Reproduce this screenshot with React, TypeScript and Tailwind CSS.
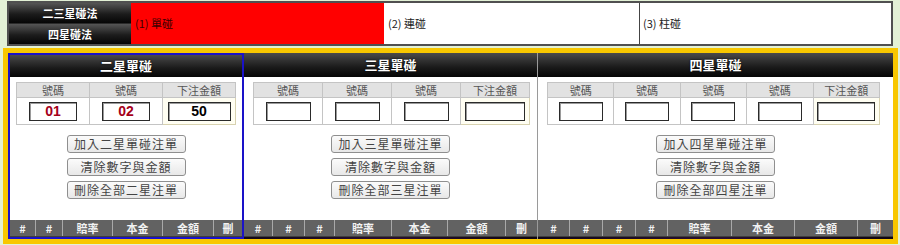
import React from "react";

const FONT = '"Noto Sans CJK TC", "Liberation Sans", sans-serif';

type PanelProps = {
  title: string;
  count: number;
  numW: number;
  amtW: number;
  values?: string[];
  amount?: string;
  addLabel: string;
  delLabel: string;
  bar: { w: number; label: string }[];
  tableMl: number;
  tableW: number;
  selected?: boolean;
  rightBorder?: boolean;
  width: number;
};

function Panel(p: PanelProps) {
  const cols = Array.from({ length: p.count });
  return (
    <div
      className={
        "flex flex-col h-full bg-white " +
        (p.selected ? "border-2 border-[#1a12c8] " : "") +
        (p.rightBorder ? "border-r border-r-[#9a9a9a] " : "")
      }
      style={{ width: p.width }}
    >
      <div
        className={
          "flex items-center justify-center text-white font-bold text-[13px] bg-[linear-gradient(#4a4a4a,#1a1a1a_60%,#050505)] [text-shadow:0_0_2px_#000] " +
          (p.selected ? "h-[22px]" : "h-[24px]")
        }
      >
        {p.title}
      </div>
      <table
        className="mt-[5px] border-collapse table-fixed border border-[#bdbdbd]"
        style={{ marginLeft: p.tableMl, width: p.tableW }}
      >
        <tbody>
          <tr className="h-[15px] bg-[#e2e2e2]">
            {cols.map((_, i) => (
              <td
                key={i}
                className="border border-[#c4c4c4] text-center text-[11px] leading-[13px] text-[#555] p-0"
              >
                號碼
              </td>
            ))}
            <td className="border border-[#c4c4c4] text-center text-[11px] leading-[13px] text-[#555] p-0">
              下注金額
            </td>
          </tr>
          <tr className="h-[27px]">
            {cols.map((_, i) => (
              <td key={i} className="border border-[#c4c4c4] p-0">
                <div className="flex justify-center">
                  <div
                    className="h-[19px] border border-[#2a2a2a] shadow-[inset_1px_1px_0_#9a9a9a] bg-white flex items-center justify-center text-[14px] font-bold text-[#a5001a] font-['Liberation_Sans']"
                    style={{ width: p.numW }}
                  >
                    {p.values ? p.values[i] : ""}
                  </div>
                </div>
              </td>
            ))}
            <td className="border border-[#d8d2b0] p-0 bg-[#fffef2]">
              <div className="flex justify-center">
                <div
                  className="h-[19px] border border-[#2a2a2a] shadow-[inset_1px_1px_0_#9a9a9a] bg-white flex items-center justify-center text-[14px] font-bold text-black font-['Liberation_Sans']"
                  style={{ width: p.amtW }}
                >
                  {p.amount ?? ""}
                </div>
              </div>
            </td>
          </tr>
        </tbody>
      </table>
      <div className="mt-[10px] flex flex-col items-center gap-[5px]">
        {[p.addLabel, "清除數字與金額", p.delLabel].map((l, i) => (
          <div
            key={i}
            className="w-[119px] h-[18px] rounded-[3px] border border-[#8f8f8f] bg-[linear-gradient(#fbfbfb,#e8e8e8)] flex items-center justify-center text-[12px] text-[#444] tracking-[1px]"
          >
            {l}
          </div>
        ))}
      </div>
      <div className="flex-1" />
      <div className="h-[17px] flex bg-[#626262] border-b border-b-[#3e3e3e]">
        {p.bar.map((b, i) => (
          <div
            key={i}
            className={
              "flex items-center justify-center text-[11px] font-bold text-[#f2f2f2] " +
              (i < p.bar.length - 1 ? "border-r border-r-[#a8a8a8]" : "")
            }
            style={{ width: b.w }}
          >
            {b.label}
          </div>
        ))}
      </div>
      {!p.selected && <div className="h-[2px] bg-[linear-gradient(90deg,#120818,#2a1030,#100612)]" />}
    </div>
  );
}

export default function App() {
  return (
    <div
      className="w-[900px] h-[245px] bg-[#e3f1d6] overflow-hidden"
      style={{ fontFamily: FONT }}
    >
      <div className="ml-[7px] mt-[1px] w-[886px] h-[45px] flex border-2 border-[#505050] bg-white">
        <div className="w-[122px] flex flex-col gap-[1px] bg-[#2a2a2a]">
          <div className="flex-1 flex items-center justify-center text-white font-bold text-[11px] bg-[linear-gradient(#555,#1c1c1c_55%,#050505)]">
            二三星碰法
          </div>
          <div className="flex-1 flex items-center justify-center text-white font-bold text-[11px] bg-[linear-gradient(#555,#1c1c1c_55%,#050505)]">
            四星碰法
          </div>
        </div>
        <div className="w-[253px] bg-[#ff0000] flex items-center pl-[4px] text-[11px] text-[#3a0000]">
          (1) 單碰
        </div>
        <div className="w-[256px] flex items-center pl-[4px] text-[11px] text-[#222] border-r border-r-[#444]">
          (2) 連碰
        </div>
        <div className="flex-1 flex items-center pl-[3px] text-[11px] text-[#222]">
          (3) 柱碰
        </div>
      </div>
      <div className="ml-[3px] mt-[2px] w-[895px] h-[196px] border-[5px] border-[#f8c700] flex">
        <Panel
          title="二星單碰"
          count={2}
          numW={48}
          amtW={63}
          values={["01", "02"]}
          amount="50"
          addLabel="加入二星單碰注單"
          delLabel="刪除全部二星注單"
          tableMl={6}
          tableW={220}
          selected
          width={236}
          bar={[
            { w: 26, label: "#" },
            { w: 27, label: "#" },
            { w: 50, label: "賠率" },
            { w: 50, label: "本金" },
            { w: 51, label: "金額" },
            { w: 28, label: "刪" },
          ]}
        />
        <Panel
          title="三星單碰"
          count={3}
          numW={45}
          amtW={60}
          addLabel="加入三星單碰注單"
          delLabel="刪除全部三星注單"
          tableMl={9}
          tableW={277}
          rightBorder
          width={294}
          bar={[
            { w: 29, label: "#" },
            { w: 32, label: "#" },
            { w: 30, label: "#" },
            { w: 57, label: "賠率" },
            { w: 56, label: "本金" },
            { w: 58, label: "金額" },
            { w: 31, label: "刪" },
          ]}
        />
        <Panel
          title="四星單碰"
          count={4}
          numW={44}
          amtW={58}
          addLabel="加入四星單碰注單"
          delLabel="刪除全部四星注單"
          tableMl={9}
          tableW={333}
          width={355}
          bar={[
            { w: 32, label: "#" },
            { w: 33, label: "#" },
            { w: 33, label: "#" },
            { w: 32, label: "#" },
            { w: 64, label: "賠率" },
            { w: 63, label: "本金" },
            { w: 63, label: "金額" },
            { w: 35, label: "刪" },
          ]}
        />
      </div>
    </div>
  );
}
